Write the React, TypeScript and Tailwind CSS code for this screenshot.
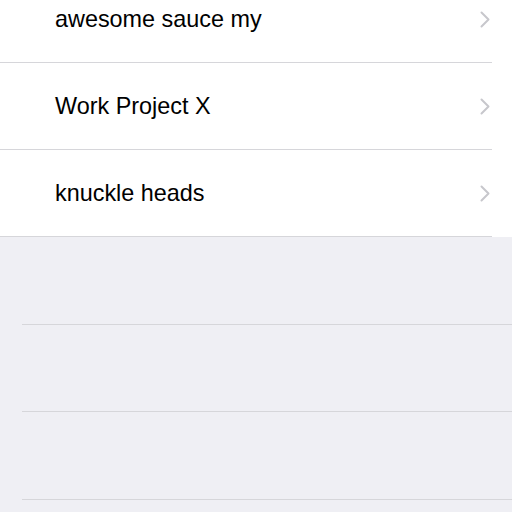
import React from "react";

const items = ["awesome sauce my", "Work Project X", "knuckle heads"];

const Chevron = () => (
  <svg width="10" height="17" viewBox="0 0 10 17" fill="none">
    <path d="M1.5 1.5 L8.5 8.5 L1.5 15.5" stroke="#c7c7cc" strokeWidth="2" strokeLinecap="round" strokeLinejoin="round" />
  </svg>
);

const App = () => {
  return (
    <div className="w-[512px] h-[512px] overflow-hidden bg-[#efeff4] font-['Liberation_Sans',Arial,sans-serif]">
      <div className="bg-white mt-[-24px]">
        {items.map((name) => (
          <div key={name} className="h-[87px] box-border border-b border-[#d6d6da] mr-[20px] flex items-center">
            <span className="pl-[55px] text-[23.4px] text-black flex-1 pt-[1px]">{name}</span>
            <span className="mr-[2px] flex items-center">
              <Chevron />
            </span>
          </div>
        ))}
      </div>
      <div>
        <div className="h-[88px] box-border border-b border-[#d6d6da] ml-[22px]" />
        <div className="h-[87px] box-border border-b border-[#d6d6da] ml-[22px]" />
        <div className="h-[88px] box-border border-b border-[#d6d6da] ml-[22px]" />
      </div>
    </div>
  );
};

export default App;
